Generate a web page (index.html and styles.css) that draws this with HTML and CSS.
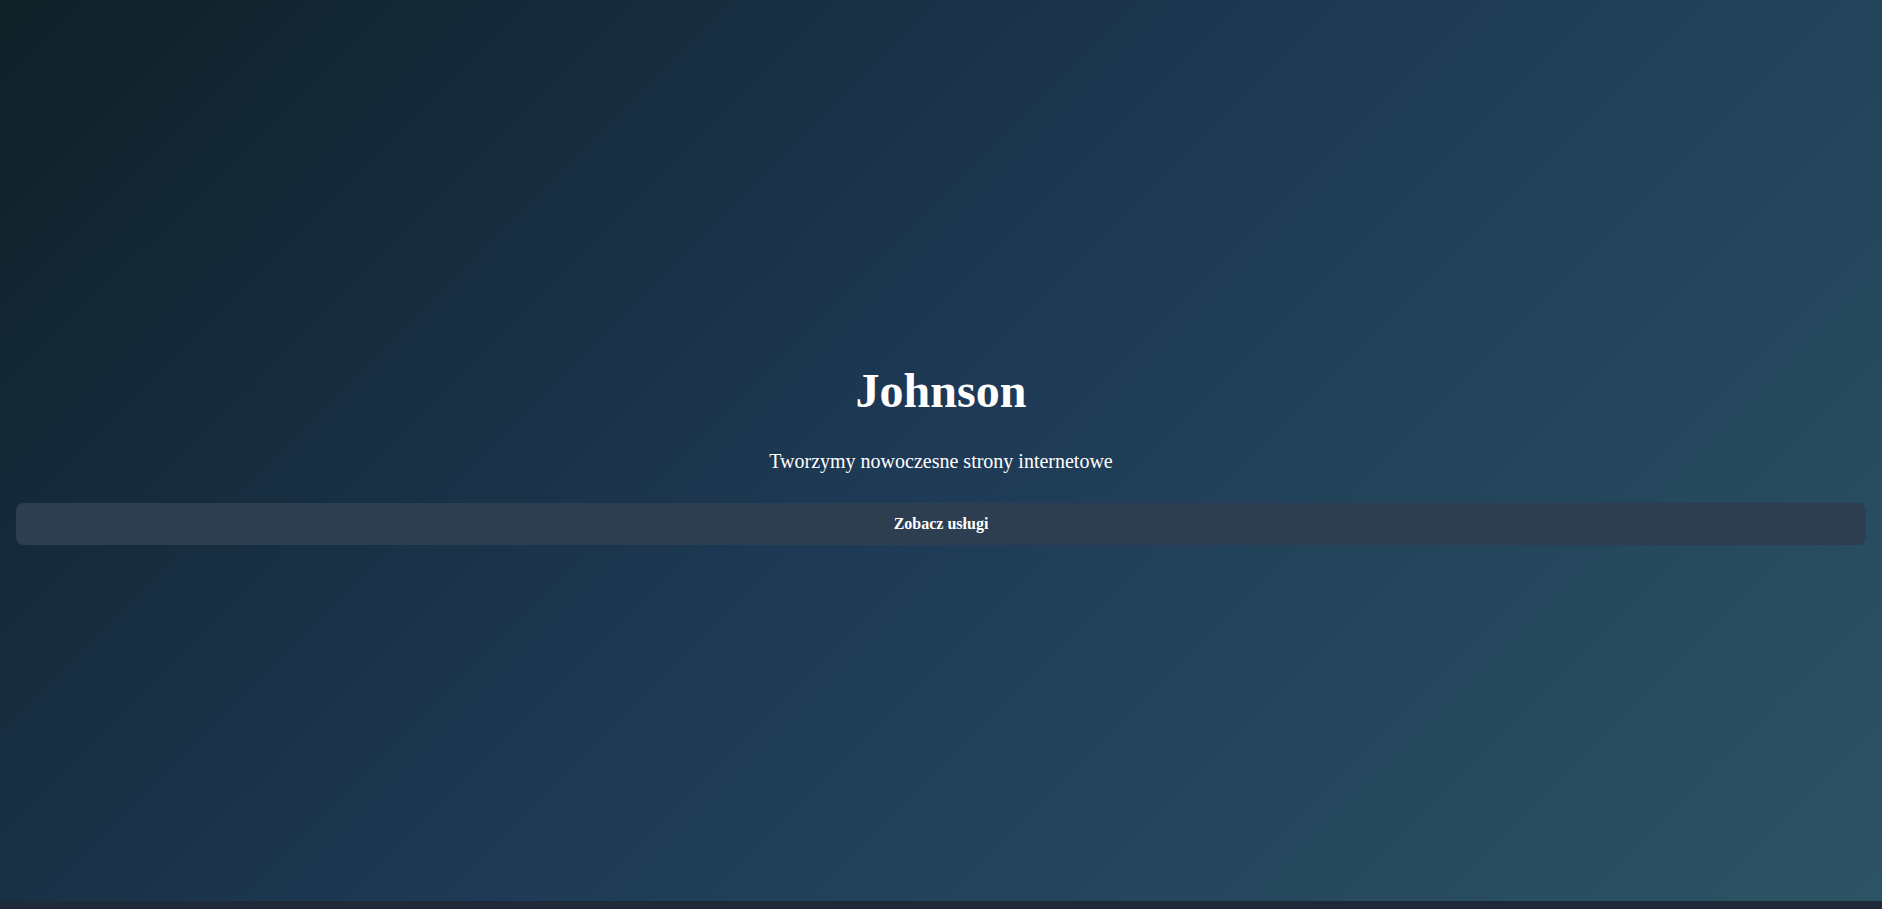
FILE: index.html
```html
<!DOCTYPE html>
<html lang="pl">
<head>
<meta charset="utf-8">
<title>Johnson</title>
<link rel="stylesheet" href="styles.css">
</head>
<body>
<section class="hero">
  <h1 class="hero-title">Johnson</h1>
  <p class="hero-sub">Tworzymy nowoczesne strony internetowe</p>
  <a class="hero-btn" href="#uslugi">Zobacz usługi</a>
</section>
<footer class="footer"></footer>
</body>
</html>
```

FILE: styles.css
```css
html, body {
  margin: 0;
  padding: 0;
}
body {
  background: #1f2a38;
  font-family: "Liberation Serif", "Times New Roman", serif;
  color: #ffffff;
  overflow: hidden;
}
.hero {
  height: 901px;
  box-sizing: border-box;
  padding: 6px 16px 0;
  display: flex;
  flex-direction: column;
  justify-content: center;
  align-items: stretch;
  text-align: center;
  background: linear-gradient(135deg, #0f2027 0%, #1e3a56 50%, #2c5364 100%);
}
.hero-title {
  margin: 0 0 32px;
  font-size: 48px;
  font-weight: bold;
}
.hero-sub {
  margin: 0 0 30px;
  font-size: 20px;
}
.hero-btn {
  display: block;
  padding: 12px 0;
  background: #2c3e50;
  border-radius: 8px;
  color: #ffffff;
  font-weight: bold;
  font-size: 16px;
  text-decoration: none;
}
.footer {
  height: 8px;
  background: #1f2a38;
}
```
